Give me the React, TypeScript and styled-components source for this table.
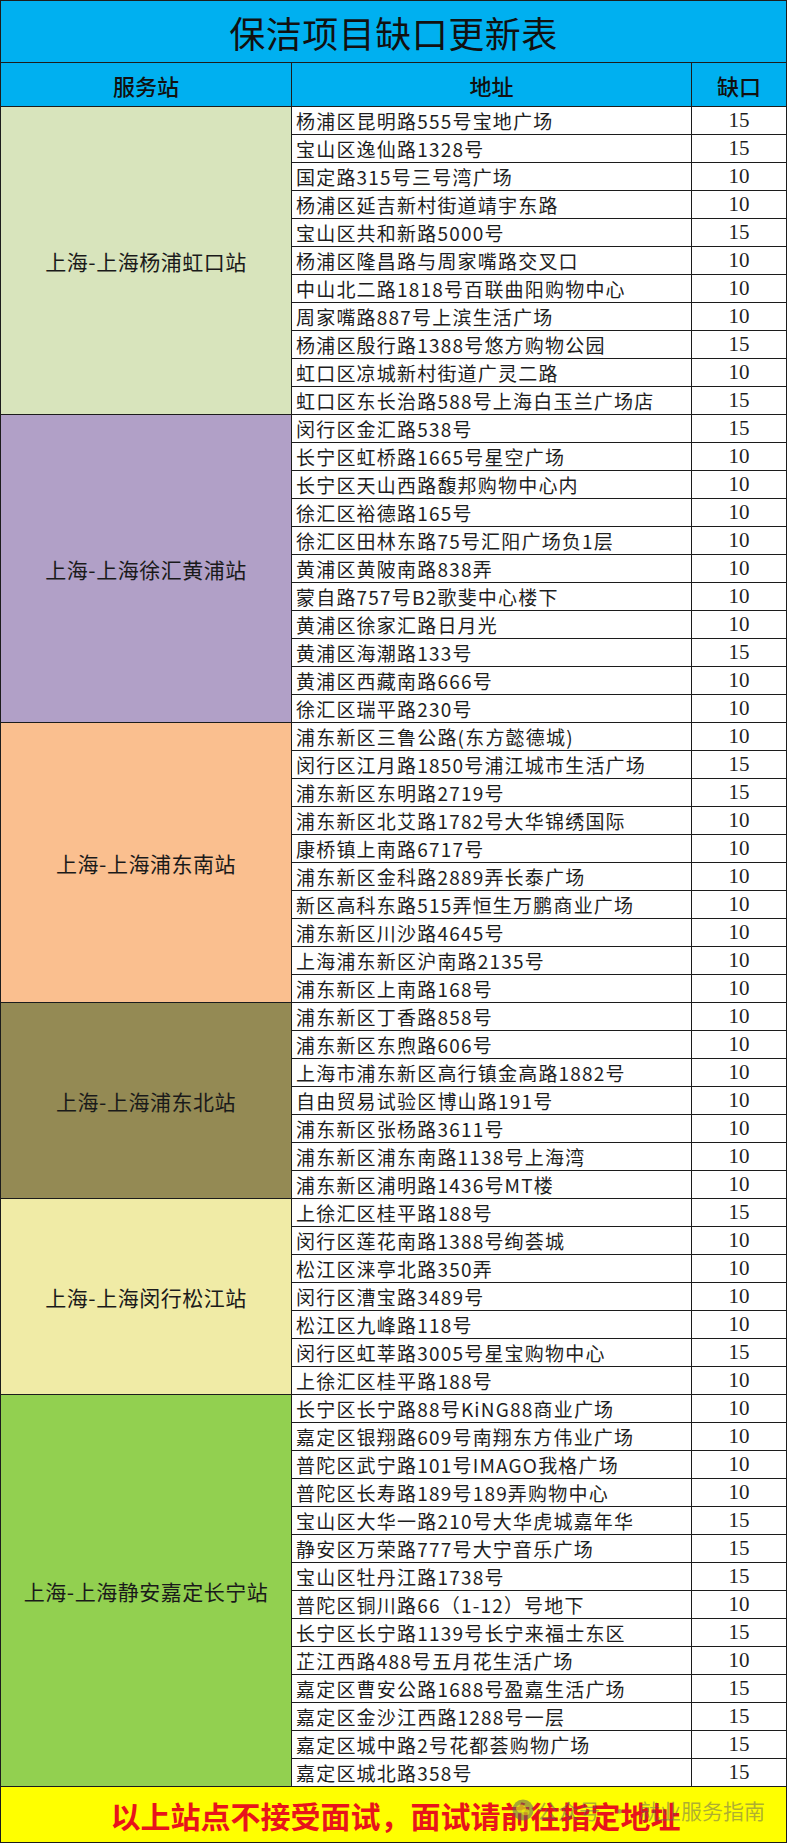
import React from "react";
import styled, { createGlobalStyle } from "styled-components";

const Global = createGlobalStyle`
  html, body { margin: 0; padding: 0; background: #ffffff; }
  body { font-family: "Noto Sans CJK SC", "Noto Sans", sans-serif; }
`;

type Row = [string, number];
type Group = { name: string; color: string; rows: Row[] };

const groups: Group[] = [
  {
    name: "上海-上海杨浦虹口站",
    color: "#D8E4BC",
    rows: [
      ["杨浦区昆明路555号宝地广场", 15],
      ["宝山区逸仙路1328号", 15],
      ["国定路315号三号湾广场", 10],
      ["杨浦区延吉新村街道靖宇东路", 10],
      ["宝山区共和新路5000号", 15],
      ["杨浦区隆昌路与周家嘴路交叉口", 10],
      ["中山北二路1818号百联曲阳购物中心", 10],
      ["周家嘴路887号上滨生活广场", 10],
      ["杨浦区殷行路1388号悠方购物公园", 15],
      ["虹口区凉城新村街道广灵二路", 10],
      ["虹口区东长治路588号上海白玉兰广场店", 15],
    ],
  },
  {
    name: "上海-上海徐汇黄浦站",
    color: "#B1A0C7",
    rows: [
      ["闵行区金汇路538号", 15],
      ["长宁区虹桥路1665号星空广场", 10],
      ["长宁区天山西路馥邦购物中心内", 10],
      ["徐汇区裕德路165号", 10],
      ["徐汇区田林东路75号汇阳广场负1层", 10],
      ["黄浦区黄陂南路838弄", 10],
      ["蒙自路757号B2歌斐中心楼下", 10],
      ["黄浦区徐家汇路日月光", 10],
      ["黄浦区海潮路133号", 15],
      ["黄浦区西藏南路666号", 10],
      ["徐汇区瑞平路230号", 10],
    ],
  },
  {
    name: "上海-上海浦东南站",
    color: "#FABF8F",
    rows: [
      ["浦东新区三鲁公路(东方懿德城)", 10],
      ["闵行区江月路1850号浦江城市生活广场", 15],
      ["浦东新区东明路2719号", 15],
      ["浦东新区北艾路1782号大华锦绣国际", 10],
      ["康桥镇上南路6717号", 10],
      ["浦东新区金科路2889弄长泰广场", 10],
      ["新区高科东路515弄恒生万鹏商业广场", 10],
      ["浦东新区川沙路4645号", 10],
      ["上海浦东新区沪南路2135号", 10],
      ["浦东新区上南路168号", 10],
    ],
  },
  {
    name: "上海-上海浦东北站",
    color: "#948A54",
    rows: [
      ["浦东新区丁香路858号", 10],
      ["浦东新区东煦路606号", 10],
      ["上海市浦东新区高行镇金高路1882号", 10],
      ["自由贸易试验区博山路191号", 10],
      ["浦东新区张杨路3611号", 10],
      ["浦东新区浦东南路1138号上海湾", 10],
      ["浦东新区浦明路1436号MT楼", 10],
    ],
  },
  {
    name: "上海-上海闵行松江站",
    color: "#F0EBA6",
    rows: [
      ["上徐汇区桂平路188号", 15],
      ["闵行区莲花南路1388号绚荟城", 10],
      ["松江区涞亭北路350弄", 10],
      ["闵行区漕宝路3489号", 10],
      ["松江区九峰路118号", 10],
      ["闵行区虹莘路3005号星宝购物中心", 15],
      ["上徐汇区桂平路188号", 10],
    ],
  },
  {
    name: "上海-上海静安嘉定长宁站",
    color: "#92D050",
    rows: [
      ["长宁区长宁路88号KiNG88商业广场", 10],
      ["嘉定区银翔路609号南翔东方伟业广场", 10],
      ["普陀区武宁路101号IMAGO我格广场", 10],
      ["普陀区长寿路189号189弄购物中心", 10],
      ["宝山区大华一路210号大华虎城嘉年华", 15],
      ["静安区万荣路777号大宁音乐广场", 15],
      ["宝山区牡丹江路1738号", 15],
      ["普陀区铜川路66（1-12）号地下", 10],
      ["长宁区长宁路1139号长宁来福士东区", 15],
      ["芷江西路488号五月花生活广场", 10],
      ["嘉定区曹安公路1688号盈嘉生活广场", 15],
      ["嘉定区金沙江西路1288号一层", 15],
      ["嘉定区城中路2号花都荟购物广场", 15],
      ["嘉定区城北路358号", 15],
    ],
  },
];

const totalRows = groups.reduce((n, g) => n + g.rows.length, 0);

const Sheet = styled.div<{ $rows: number }>`
  position: relative;
  width: 787px;
  box-sizing: border-box;
  display: grid;
  grid-template-columns: 290px 399px 94px;
  grid-template-rows: 61px 43px repeat(${(p) => p.$rows}, 27px) 55px;
  gap: 1px;
  padding: 1px;
  background: #1c1c1c;
`;

const TitleCell = styled.div`
  grid-column: 1 / -1;
  background: #00b0f0;
  display: flex;
  align-items: center;
  justify-content: center;
  font-size: 36px;
  font-weight: 400;
  color: #111;
  letter-spacing: 0.5px;
`;

const HeadCell = styled.div`
  background: #00b0f0;
  display: flex;
  align-items: center;
  justify-content: center;
  font-size: 22px;
  font-weight: 500;
  color: #111;
`;

const StationCell = styled.div<{ $bg: string; $span: number }>`
  grid-column: 1;
  grid-row: span ${(p) => p.$span};
  background: ${(p) => p.$bg};
  display: flex;
  align-items: center;
  justify-content: center;
  font-size: 21px;
  letter-spacing: 0.5px;
  color: #1a1a1a;
`;

const AddressCell = styled.div`
  grid-column: 2;
  background: #fff;
  display: flex;
  align-items: center;
  padding-left: 4px;
  font-size: 19px;
  letter-spacing: 1.2px;
  color: #1e1e1e;
  white-space: nowrap;
  overflow: hidden;
`;

const CountCell = styled.div`
  grid-column: 3;
  background: #fff;
  display: flex;
  align-items: center;
  justify-content: center;
  font-family: "Liberation Serif", "DejaVu Serif", serif;
  font-size: 21px;
  color: #1e1e1e;
`;

const FooterCell = styled.div`
  grid-column: 1 / -1;
  background: #ffff00;
  display: flex;
  align-items: center;
  justify-content: center;
  font-size: 30px;
  font-weight: 700;
  color: #e8141b;
  padding-left: 4px;
`;

const Watermark = styled.div`
  position: absolute;
  left: 512px;
  bottom: 18px;
  display: flex;
  align-items: center;
  gap: 3px;
  font-size: 21px;
  color: rgba(95, 95, 95, 0.5);
  white-space: nowrap;
  pointer-events: none;
`;

const Dot = styled.span`
  margin: 0 6px;
`;

const WeChatMark = () => (
  <svg width="22" height="22" viewBox="0 0 22 22">
    <circle cx="11" cy="11" r="10.5" fill="rgba(95,95,95,0.55)" />
    <ellipse cx="9" cy="9.5" rx="5" ry="4" fill="rgba(255,255,0,0.55)" />
    <ellipse cx="13.5" cy="13" rx="4" ry="3.2" fill="rgba(255,255,0,0.45)" />
  </svg>
);

export default function App() {
  return (
    <>
      <Global />
      <Sheet $rows={totalRows}>
        <TitleCell>保洁项目缺口更新表</TitleCell>
        <HeadCell>服务站</HeadCell>
        <HeadCell>地址</HeadCell>
        <HeadCell>缺口</HeadCell>
        {groups.map((g) => (
          <React.Fragment key={g.name}>
            <StationCell $bg={g.color} $span={g.rows.length}>
              {g.name}
            </StationCell>
            {g.rows.map(([addr, n], i) => (
              <React.Fragment key={i}>
                <AddressCell>{addr}</AddressCell>
                <CountCell>{n}</CountCell>
              </React.Fragment>
            ))}
          </React.Fragment>
        ))}
        <FooterCell>以上站点不接受面试，面试请前往指定地址</FooterCell>
        <Watermark>
          <WeChatMark />
          <span>公众号</span>
          <Dot>·</Dot>
          <span>就业服务指南</span>
        </Watermark>
      </Sheet>
    </>
  );
}
